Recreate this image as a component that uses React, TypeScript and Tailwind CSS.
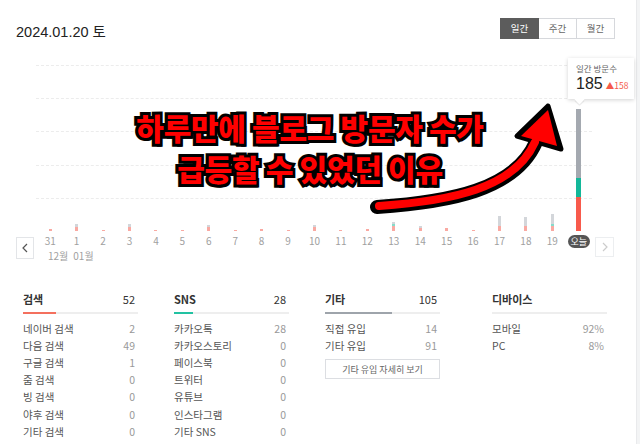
import React from "react";

type Bar = { g: number; t: number; r: number };

const days: { label: string; bar: Bar }[] = [
  { label: "31", bar: { g: 0, t: 0, r: 2 } },
  { label: "1", bar: { g: 3, t: 0, r: 4 } },
  { label: "2", bar: { g: 0, t: 0, r: 1 } },
  { label: "3", bar: { g: 3, t: 0, r: 4 } },
  { label: "4", bar: { g: 0, t: 0, r: 1 } },
  { label: "5", bar: { g: 0, t: 0, r: 1 } },
  { label: "6", bar: { g: 2, t: 0, r: 4 } },
  { label: "7", bar: { g: 0, t: 0, r: 1 } },
  { label: "8", bar: { g: 0, t: 0, r: 2 } },
  { label: "9", bar: { g: 0, t: 0, r: 1 } },
  { label: "10", bar: { g: 2, t: 0, r: 4 } },
  { label: "11", bar: { g: 0, t: 0, r: 1 } },
  { label: "12", bar: { g: 0, t: 0, r: 2 } },
  { label: "13", bar: { g: 2, t: 2, r: 5 } },
  { label: "14", bar: { g: 2, t: 0, r: 3 } },
  { label: "15", bar: { g: 0, t: 0, r: 3 } },
  { label: "16", bar: { g: 0, t: 0, r: 1 } },
  { label: "17", bar: { g: 10, t: 0, r: 5 } },
  { label: "18", bar: { g: 9, t: 0, r: 5 } },
  { label: "19", bar: { g: 10, t: 2, r: 5 } },
];

const search = [
  ["네이버 검색", "2"],
  ["다음 검색", "49"],
  ["구글 검색", "1"],
  ["줌 검색", "0"],
  ["빙 검색", "0"],
  ["야후 검색", "0"],
  ["기타 검색", "0"],
];
const sns = [
  ["카카오톡", "28"],
  ["카카오스토리", "0"],
  ["페이스북", "0"],
  ["트위터", "0"],
  ["유튜브", "0"],
  ["인스타그램", "0"],
  ["기타 SNS", "0"],
];
const etc = [
  ["직접 유입", "14"],
  ["기타 유입", "91"],
];
const device = [
  ["모바일", "92%"],
  ["PC", "8%"],
];

function Column({
  title,
  total,
  color,
  fill,
  rows,
  children,
}: {
  title: string;
  total?: string;
  color: string;
  fill: number;
  rows: string[][];
  children?: React.ReactNode;
}) {
  return (
    <div className="w-[115px] flex flex-col">
      <div className="flex justify-between items-center h-[14px] pr-[3px]">
        <span className="text-[11px] font-bold text-[#333]">{title}</span>
        {total && <span className="text-[11px] text-[#333]">{total}</span>}
      </div>
      <div className="mt-[6px] h-[2px] bg-[#eeeeee] flex">
        <div className="h-[2px]" style={{ width: `${fill}px`, background: color }} />
      </div>
      <div className="mt-[6px] flex flex-col">
        {rows.map(([k, v]) => (
          <div key={k} className="flex justify-between items-center h-[17.2px] pr-[3px]">
            <span className="text-[10.5px] text-[#555]">{k}</span>
            <span className="text-[10.5px] text-[#999]">{v}</span>
          </div>
        ))}
      </div>
      {children}
    </div>
  );
}

function BarStack({ bar, today }: { bar: Bar; today?: boolean }) {
  return (
    <div className={`flex flex-col ${today ? "w-[5px]" : "w-[3px]"}`}>
      {bar.g > 0 && (
        <div style={{ height: bar.g }} className={today ? "bg-[#a4a9b0]" : "bg-[#d3d6da]"} />
      )}
      {bar.t > 0 && (
        <div style={{ height: bar.t }} className={today ? "bg-[#13b89a]" : "bg-[#86dccb]"} />
      )}
      {bar.r > 0 && (
        <div style={{ height: bar.r }} className={today ? "bg-[#f85a4c]" : "bg-[#f9a9a2]"} />
      )}
    </div>
  );
}

export default function App() {
  return (
    <div
      className="w-[640px] h-[444px] flex bg-white overflow-hidden relative"
      style={{ fontFamily: '"Noto Sans CJK KR", "Noto Sans", sans-serif' }}
    >
      <div className="w-[636px] flex flex-col">
        {/* header */}
        <div className="flex justify-between pt-[18px] pl-[16px] pr-[21px]">
          <div
            className="mt-[3px] text-[14.5px] text-[#222] leading-[20px]"
            style={{ fontFamily: '"Liberation Sans", "Noto Sans CJK KR", sans-serif' }}
          >
            2024.01.20 <span style={{ fontFamily: '"Noto Sans CJK KR", sans-serif' }}>토</span>
          </div>
          <div className="flex h-[21px] text-[9.5px]">
            <div className="w-[39px] flex items-center justify-center bg-[#5c5c5c] text-white border border-[#5c5c5c]">
              일간
            </div>
            <div className="w-[38px] flex items-center justify-center border-y border-r border-[#d6d8dc] text-[#666]">
              주간
            </div>
            <div className="w-[38px] flex items-center justify-center border-y border-r border-[#d6d8dc] text-[#666]">
              월간
            </div>
          </div>
        </div>

        {/* plot */}
        <div className="mt-[23px] ml-[36px] w-[556px] h-[166px] relative">
          <div className="flex flex-col">
            {[0, 1, 2, 3, 4].map((i) => (
              <div key={i} className="h-[33.2px] border-t border-dashed border-[#ececec]" />
            ))}
          </div>
          <div className="absolute inset-0 left-[1px] grid grid-cols-21 items-end">
            {days.map((d) => (
              <div key={d.label} className="flex justify-center items-end">
                <BarStack bar={d.bar} />
              </div>
            ))}
            <div className="flex justify-center items-end">
              <BarStack bar={{ g: 69, t: 19, r: 34 }} today />
            </div>
          </div>
        </div>

        {/* labels row */}
        <div className="flex pl-[16px] mt-[3px]">
          <div className="mt-[3px] w-[18px] h-[22px] border border-[#e3e5e8] flex items-center justify-center">
            <svg width="6" height="10" viewBox="0 0 6 10">
              <path d="M5 1 L1 5 L5 9" fill="none" stroke="#555" strokeWidth="1.2" />
            </svg>
          </div>
          <div className="ml-[3px] w-[555px] flex flex-col">
            <div className="grid grid-cols-21 h-[14px] items-center text-[10px] text-[#a0a0a0]">
              {days.map((d) => (
                <div key={d.label} className="text-center leading-[14px]">
                  {d.label}
                </div>
              ))}
              <div className="flex justify-center">
                <span className="bg-[#555] text-white text-[9px] leading-[13px] px-[3px] rounded-full">
                  오늘
                </span>
              </div>
            </div>
            <div className="flex ml-[11px] gap-[5px] h-[14px] items-center text-[10px] text-[#a0a0a0]">
              <span>12월</span>
              <span>01월</span>
            </div>
          </div>
          <div className="ml-[3px] mt-[3px] w-[19px] h-[20px] border border-[#eceef0] flex items-center justify-center">
            <svg width="6" height="10" viewBox="0 0 6 10">
              <path d="M1 1 L5 5 L1 9" fill="none" stroke="#ccc" strokeWidth="1.2" />
            </svg>
          </div>
        </div>

        {/* stats */}
        <div className="flex mt-[30px] pl-[23px]">
          <Column title="검색" total="52" color="#f4705e" fill={33} rows={search} />
          <div className="ml-[36px]">
            <Column title="SNS" total="28" color="#22c2a2" fill={19} rows={sns} />
          </div>
          <div className="ml-[36px]">
            <Column title="기타" total="105" color="#9ea4ab" fill={67} rows={etc}>
              <div className="mt-[5px] h-[20px] border border-[#dcdee2] flex items-center justify-center text-[9px] text-[#666]">
                기타 유입 자세히 보기
              </div>
            </Column>
          </div>
          <div className="ml-[52px]">
            <Column title="디바이스" color="#eeeeee" fill={0} rows={device} />
          </div>
        </div>
      </div>
      <div className="w-[4px] bg-[#f3f4f5] border-l border-[#e9eaec]" />

      {/* tooltip */}
      <div className="absolute left-[568px] top-[58px] w-[66px] h-[41px] bg-white shadow-[0_1px_4px_rgba(0,0,0,0.18)] pl-[8px] pt-[4px]">
        <div className="text-[8.5px] text-[#666] leading-[12px]">일간 방문수</div>
        <div className="flex items-baseline">
          <span className="text-[16px] text-[#222] leading-[20px]" style={{ fontFamily: '"Liberation Sans", sans-serif' }}>185</span>
          <span className="ml-[3px] text-[8.5px] text-[#f55a4a]">▲158</span>
        </div>
        <div className="absolute left-[8px] -bottom-[4px] w-[7px] h-[7px] bg-white rotate-45 shadow-[1px_1px_1px_rgba(0,0,0,0.1)]" />
      </div>

      {/* overlay arrow */}
      <svg className="absolute left-0 top-0" width="640" height="444" viewBox="0 0 640 444">
        <path d="M377 207 C 450 202, 515 190, 536 142" fill="none" stroke="#000" strokeWidth="14" strokeLinecap="round" />
        <polygon points="548,106 517,136 561,149" fill="#000" stroke="#000" strokeWidth="5" strokeLinejoin="round" />
        <path d="M379 206 C 450 201, 514 189, 535 142" fill="none" stroke="#ff0000" strokeWidth="8" strokeLinecap="round" />
        <polygon points="548,110 521,136 557,146" fill="#ff0000" />
      </svg>

      {/* overlay title */}
      <div
        className="absolute left-[90px] top-[107px] w-[440px] text-center text-[30px] font-black leading-[41px] text-[#ff0000] tracking-[-0.3px] [-webkit-text-stroke:6px_#000] [paint-order:stroke_fill] [text-shadow:2px_3px_0_#000]"
        style={{ fontFamily: '"Noto Sans CJK KR", sans-serif' }}
      >
        <div>하루만에 블로그 방문자 수가</div>
        <div>급등할 수 있었던 이유</div>
      </div>
    </div>
  );
}
